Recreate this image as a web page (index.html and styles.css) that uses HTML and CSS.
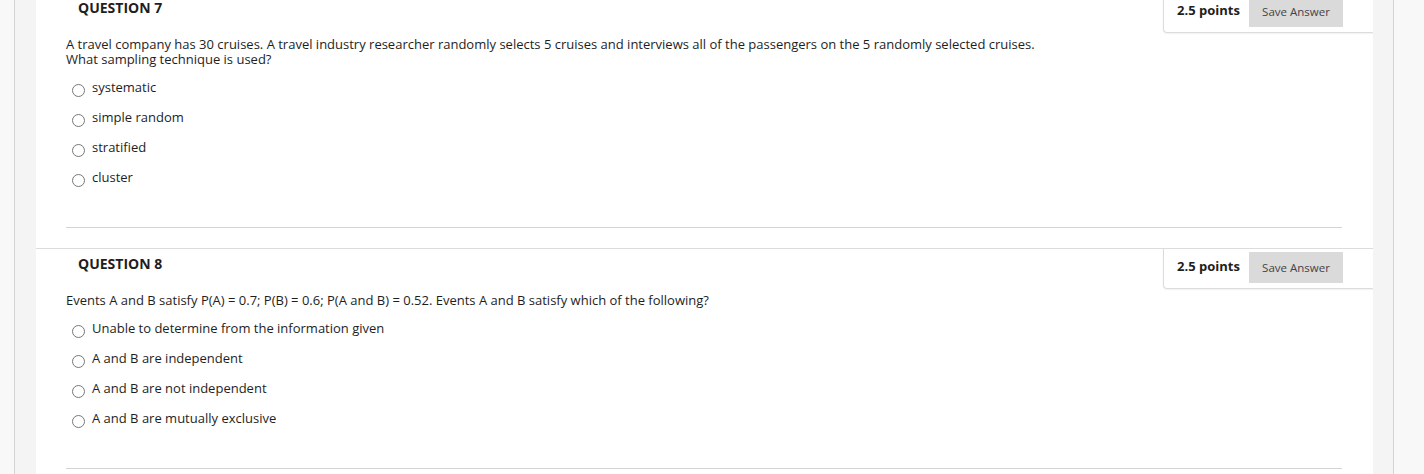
FILE: index.html
```html
<!DOCTYPE html>
<html>
<head>
<meta charset="utf-8">
<link rel="stylesheet" href="styles.css">
</head>
<body>
<div class="frame">
  <div class="gutter">
    <div class="content">
      <div class="question first">
        <div class="q-head">
          <h3 class="q-title">QUESTION 7</h3>
          <div class="points-box">
            <span class="points">2.5 points</span>
            <button class="save">Save Answer</button>
          </div>
        </div>
        <div class="q-text">A travel company has 30 cruises. A travel industry researcher randomly selects 5 cruises and interviews all of the passengers on the 5 randomly selected cruises.<br>What sampling technique is used?</div>
        <ul class="options">
          <li class="option"><span class="radio"></span><span class="label">systematic</span></li>
          <li class="option"><span class="radio"></span><span class="label">simple random</span></li>
          <li class="option"><span class="radio"></span><span class="label">stratified</span></li>
          <li class="option"><span class="radio"></span><span class="label">cluster</span></li>
        </ul>
        <hr class="sep">
      </div>
      <div class="question">
        <div class="q-head">
          <h3 class="q-title">QUESTION 8</h3>
          <div class="points-box">
            <span class="points">2.5 points</span>
            <button class="save">Save Answer</button>
          </div>
        </div>
        <div class="q-text">Events A and B satisfy P(A) = 0.7; P(B) = 0.6; P(A and B) = 0.52. Events A and B satisfy which of the following?</div>
        <ul class="options">
          <li class="option"><span class="radio"></span><span class="label">Unable to determine from the information given</span></li>
          <li class="option"><span class="radio"></span><span class="label">A and B are independent</span></li>
          <li class="option"><span class="radio"></span><span class="label">A and B are not independent</span></li>
          <li class="option"><span class="radio"></span><span class="label">A and B are mutually exclusive</span></li>
        </ul>
        <hr class="sep">
      </div>
    </div>
  </div>
</div>
</body>
</html>
```
FILE: styles.css
```css
html, body {
  margin: 0;
  padding: 0;
  background: #f8f8f8;
  height: 474px;
  overflow: hidden;
  font-family: "Open Sans", "Liberation Sans", sans-serif;
  color: #1e1e1e;
}
.frame {
  margin-left: 14px;
  width: 1378px;
  border-left: 1px solid #d4d4d4;
  border-right: 1px solid #d4d4d4;
  background: #f4f4f4;
  height: 474px;
}
.gutter {
  padding: 0 20px 0 21px;
}
.content {
  background: #fff;
  height: 474px;
  overflow: hidden;
}
.question {
  border-top: 1px solid #dcdcdc;
  height: 255px;
}
.question.first {
  margin-top: -8px;
}
.q-head {
  display: flex;
  justify-content: space-between;
  align-items: flex-start;
  height: 41px;
}
.q-title {
  margin: 0;
  padding: 5px 0 0 42px;
  font-size: 14px;
  font-weight: 700;
  line-height: 20px;
  color: #1e1e1e;
}
.points-box {
  display: flex;
  align-items: center;
  gap: 10px;
  width: 196px;
  height: 39px;
  padding: 0 0 0 13px;
  border-left: 1px solid #dcdcdc;
  border-bottom: 1px solid #dcdcdc;
  border-bottom-left-radius: 4px;
  box-shadow: 0 1px 2px rgba(0,0,0,0.06);
}
.points {
  font-size: 13px;
  font-weight: 700;
  color: #1e1e1e;
  margin-top: -6px;
  width: 62px;
  white-space: nowrap;
}
.save {
  width: 94px;
  height: 31px;
  border: none;
  background: #dadada;
  color: #444;
  font-family: "Open Sans", "Liberation Sans", sans-serif;
  font-size: 11.5px;
  padding: 0;
  margin-top: -3px;
}
.q-text {
  margin: 3px 0 0 30px;
  font-size: 13px;
  line-height: 15px;
  color: #1e1e1e;
}
.options {
  list-style: none;
  margin: 5px 0 0 0;
  padding: 0 0 0 36px;
}
.option {
  display: flex;
  align-items: center;
  height: 30px;
  font-size: 13px;
}
.radio {
  width: 11px;
  height: 11px;
  border: 1px solid #777;
  border-radius: 50%;
  margin-top: 6px;
  margin-right: 7px;
  background: #fff;
}
.sep {
  margin: 35px 31px 0 30px;
  border: none;
  border-top: 1px solid #d4d4d4;
  height: 0;
}
```
